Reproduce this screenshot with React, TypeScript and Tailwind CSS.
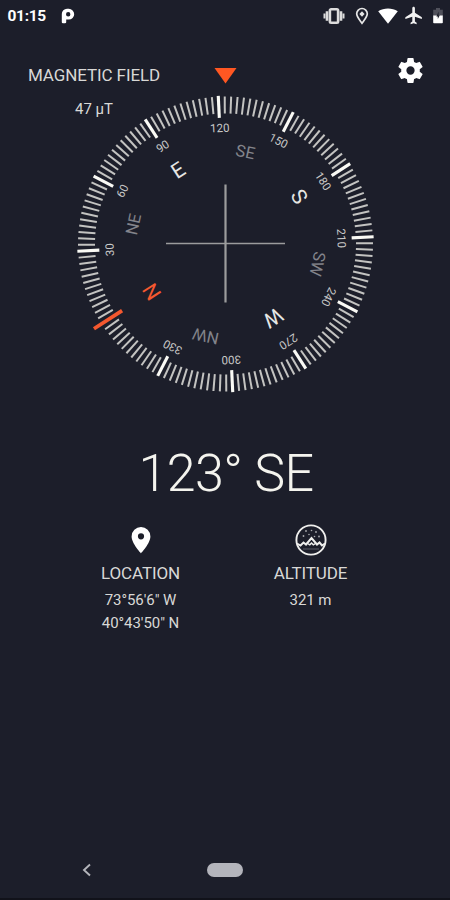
const MAJOR_LABELS = [30, 60, 90, 120, 150, 180, 210, 240, 270, 300, 330];

const POINTS = [
  { label: 'N', angle: 0 },
  { label: 'NE', angle: 45 },
  { label: 'E', angle: 90 },
  { label: 'SE', angle: 135 },
  { label: 'S', angle: 180 },
  { label: 'SW', angle: 225 },
  { label: 'W', angle: 270 },
  { label: 'NW', angle: 315 },
];

const TICKS = Array.from({ length: 144 }, (_, i) => i * 2.5);

function pointClass(label: string) {
  if (label === 'N') return 'fill-[#f4582f] text-[21px]';
  if (label.length === 2) return 'fill-[#83848b] text-[16.5px]';
  return 'fill-[#e6e6e4] text-[21px]';
}

function Dial({ heading }: { heading: number }) {
  return (
    <svg className="block h-[340px] w-[320px] shrink-0" viewBox="-160.5 -178 320 340">
      <path d="M-11 -176H11L0 -160.5Z" fill="#ff5722" />
      {/* crosshair */}
      <path d="M0 -59.5V58.5" stroke="#9b9c9d" strokeWidth="2.2" />
      <path d="M-59.5 -.5H59.5" stroke="#9b9c9d" strokeWidth="1.6" />
      <g transform={`rotate(${-heading})`}>
        {TICKS.map((deg) => {
          if (deg === 0) return null;
          const major = deg % 30 === 0;
          return (
            <line
              key={deg}
              y1={major ? -148.3 : -147.5}
              y2={major ? -126.3 : -130.5}
              stroke={major ? '#fafaf5' : '#c3c3c1'}
              strokeWidth={major ? 3.1 : 2}
              transform={`rotate(${deg})`}
            />
          );
        })}
        <line y1="-156.5" y2="-123" stroke="#f4582f" strokeWidth="3.8" />
        {MAJOR_LABELS.map((deg) => (
          <text
            key={deg}
            y="-112"
            textAnchor="middle"
            transform={`rotate(${deg})`}
            className="fill-[#c9c9c8] text-[11.5px]"
          >
            {deg}
          </text>
        ))}
        {POINTS.map(({ label, angle }) => (
          <text
            key={label}
            y={label.length === 2 ? -88.5 : -80.5}
            textAnchor="middle"
            transform={`rotate(${angle})`}
            className={pointClass(label)}
          >
            {label}
          </text>
        ))}
      </g>
    </svg>
  );
}

function StatusBar() {
  return (
    <div className="flex h-8 shrink-0 items-center pr-[6px] pl-[7.5px] text-white">
      <span className="pt-px text-[15.5px] font-bold tracking-[-0.3px]">01:15</span>
      <svg className="ml-[15px] h-4 w-[14px]" viewBox="0 0 14 16">
        <path
          fillRule="evenodd"
          d="M.8 6A5.2 5.2 0 0 1 6 .8H7.8A5.4 5.4 0 0 1 7.8 11.6H5.2V14.2Q5.2 15.3 4 15.3H2Q.8 15.3 .8 14.2ZM7.2 4.1A2.2 2.2 0 1 0 7.2 8.5A2.2 2.2 0 1 0 7.2 4.1Z"
          fill="#fff"
        />
      </svg>
      <div className="ml-auto flex items-center">
        {/* vibrate */}
        <svg className="h-[18px] w-[22px]" viewBox="0 0 22 18" fill="none" stroke="#dcdcdc">
          <rect x="6.9" y="2.3" width="8.2" height="13.4" rx="1.2" strokeWidth="2.6" />
          <path d="M4 4.2V13.8M18 4.2V13.8" strokeWidth="2.6" />
          <path d="M1.5 6.4V11.6M20.5 6.4V11.6" strokeWidth="2" />
        </svg>
        {/* location */}
        <svg className="ml-[10px] h-[18px] w-[14px]" viewBox="0 0 14 18" fill="none" stroke="#e6e6e6">
          <path d="M7 16.2C4.5 12.8 1.7 9.8 1.7 6.8A5.3 5.3 0 0 1 12.3 6.8C12.3 9.8 9.5 12.8 7 16.2Z" strokeWidth="1.7" />
          <path d="M7 4.2L9.6 7L7 9.8L4.4 7Z" fill="#e6e6e6" stroke="none" />
        </svg>
        {/* wifi */}
        <svg className="ml-[8px] h-[18px] w-[22px]" viewBox="0 0 22 18" fill="#fff">
          <path d="M1.2 4.3C7 .6 15 .6 20.8 4.3L11 16.7Z" />
        </svg>
        {/* airplane */}
        <svg className="ml-[5px] h-[20px] w-[20px]" viewBox="2 2 20 20" fill="#f2f2f2">
          <path d="M21 16v-2l-8-5V3.5c0-.83-.67-1.5-1.5-1.5S10 2.67 10 3.5V9l-8 5v2l8-2.5V19l-2 1.5V22l3.5-1 3.5 1v-1.5L13 19v-5.5l8 2.5z" transform="translate(1.6 1) scale(.87)" />
        </svg>
        {/* battery */}
        <svg className="ml-[8px] h-[18px] w-[12px]" viewBox="0 0 12 18">
          <path d="M4 1H8V2.8H10.8V9H1.2V2.8H4Z" fill="#50515b" />
          <path d="M1.2 8.5H10.8V15.4Q10.8 16.2 10 16.2H2Q1.2 16.2 1.2 15.4Z" fill="#fff" />
          <path d="M6.6 4.6L4.4 9.4H5.8V12L7.8 8.2H6.6Z" fill="#1c1e2a" />
        </svg>
      </div>
    </div>
  );
}

function AltitudeIcon() {
  return (
    <svg className="h-8 w-8" viewBox="0 0 32 32" fill="none" stroke="#efefed">
      <circle cx="16" cy="16" r="14.6" strokeWidth="1.9" />
      <path d="M2 19.5L5.5 21.5L8.5 18.5L11 20.5L16.5 14L22 20.5L24.5 18.5L27 21.5L30 19.5" strokeWidth="2" />
      <path d="M12.5 19.5L14.8 20.8L16.5 19L18.3 20.8L20.5 19.5" strokeWidth="1.4" />
      <path d="M8 25H24" strokeWidth="1" stroke="#5b5c66" />
      <g fill="#a9aaaf" stroke="none">
        <circle cx="11" cy="7" r=".9" />
        <circle cx="16.5" cy="6.5" r=".8" />
        <circle cx="21" cy="8" r=".9" />
        <circle cx="8.5" cy="12" r=".9" />
        <circle cx="14" cy="10.5" r=".8" />
        <circle cx="19.5" cy="12.5" r=".8" />
        <circle cx="24" cy="12.5" r=".9" />
      </g>
    </svg>
  );
}

export default function App() {
  return (
    <div className="flex h-[900px] w-[450px] flex-col overflow-hidden border-b-2 border-[#11121a] bg-[#1c1e2a] font-['Roboto',sans-serif] text-[#d8d8d6]">
      <StatusBar />

      <main className="relative flex flex-col items-center pt-[33.5px]">
        <div className="absolute top-[33px] left-[27px] flex w-[134px] flex-col items-center">
          <h1 className="text-[17px] leading-5 tracking-[-0.1px] whitespace-nowrap">MAGNETIC FIELD</h1>
          <p className="mt-[13.5px] text-[15px] leading-5">47 µT</p>
        </div>
        <button type="button" aria-label="Settings" className="absolute top-[23px] right-[24px]">
          <svg className="block h-[31px] w-[31px]" viewBox="0 0 24 24" fill="#fff">
            <path d="M19.14 12.94c.04-.3.06-.61.06-.94 0-.32-.02-.64-.07-.94l2.03-1.58a.49.49 0 0 0 .12-.61l-1.92-3.32a.49.49 0 0 0-.59-.22l-2.39.96c-.5-.38-1.03-.7-1.62-.94l-.36-2.54a.48.48 0 0 0-.48-.41h-3.84c-.24 0-.43.17-.47.41l-.36 2.54c-.59.24-1.13.57-1.62.94l-2.39-.96a.48.48 0 0 0-.59.22L2.74 8.87c-.12.21-.08.47.12.61l2.03 1.58c-.05.3-.09.63-.09.94s.02.64.07.94l-2.03 1.58a.49.49 0 0 0-.12.61l1.92 3.32c.12.22.37.29.59.22l2.39-.96c.5.38 1.03.7 1.62.94l.36 2.54c.05.24.24.41.48.41h3.84c.24 0 .44-.17.47-.41l.36-2.54c.59-.24 1.13-.56 1.62-.94l2.39.96c.22.08.47 0 .59-.22l1.92-3.32c.12-.22.07-.47-.12-.61zM12 15.2A3.2 3.2 0 1 1 12 8.8a3.2 3.2 0 0 1 0 6.4z" />
          </svg>
        </button>

        <Dial heading={122.8} />

        <p className="mt-[38px] ml-[2px] text-[52px] leading-[60px] font-light tracking-[-0.6px] text-[#f4f4ee]">123° SE</p>

        <div className="mt-[20px] ml-px grid w-[340px] grid-cols-2 text-center text-[15px] leading-[23px] tracking-[-0.05px]">
          <section className="flex flex-col items-center">
            <svg className="h-8 w-8" viewBox="0 0 32 32" fill="#fff">
              <path fillRule="evenodd" d="M16 3a9.4 9.4 0 0 0-9.4 9.4C6.6 19.2 16 29.2 16 29.2s9.4-10 9.4-16.8A9.4 9.4 0 0 0 16 3zm0 12.4a3.1 3.1 0 1 1 0-6.2 3.1 3.1 0 0 1 0 6.2z" />
            </svg>
            <h2 className="mt-[5px] text-[17px] leading-6 tracking-[-0.1px]">LOCATION</h2>
            <p className="mt-[4.5px]">73°56'6" W</p>
            <p>40°43'50" N</p>
          </section>
          <section className="flex flex-col items-center">
            <AltitudeIcon />
            <h2 className="mt-[5px] text-[17px] leading-6 tracking-[-0.1px]">ALTITUDE</h2>
            <p className="mt-[4.5px]">321 m</p>
          </section>
        </div>
      </main>

      <nav className="mt-auto grid h-[56px] grid-cols-[174px_102px_174px] items-center">
        <svg className="h-4 w-3 justify-self-center" viewBox="0 0 12 16" fill="none" stroke="#b4b5bb" strokeWidth="1.9">
          <path d="M9 2.5L3 8L9 13.5" />
        </svg>
        <div className="h-[14px] w-[36px] justify-self-center rounded-full bg-[#b3b4bb]" />
      </nav>
    </div>
  );
}
